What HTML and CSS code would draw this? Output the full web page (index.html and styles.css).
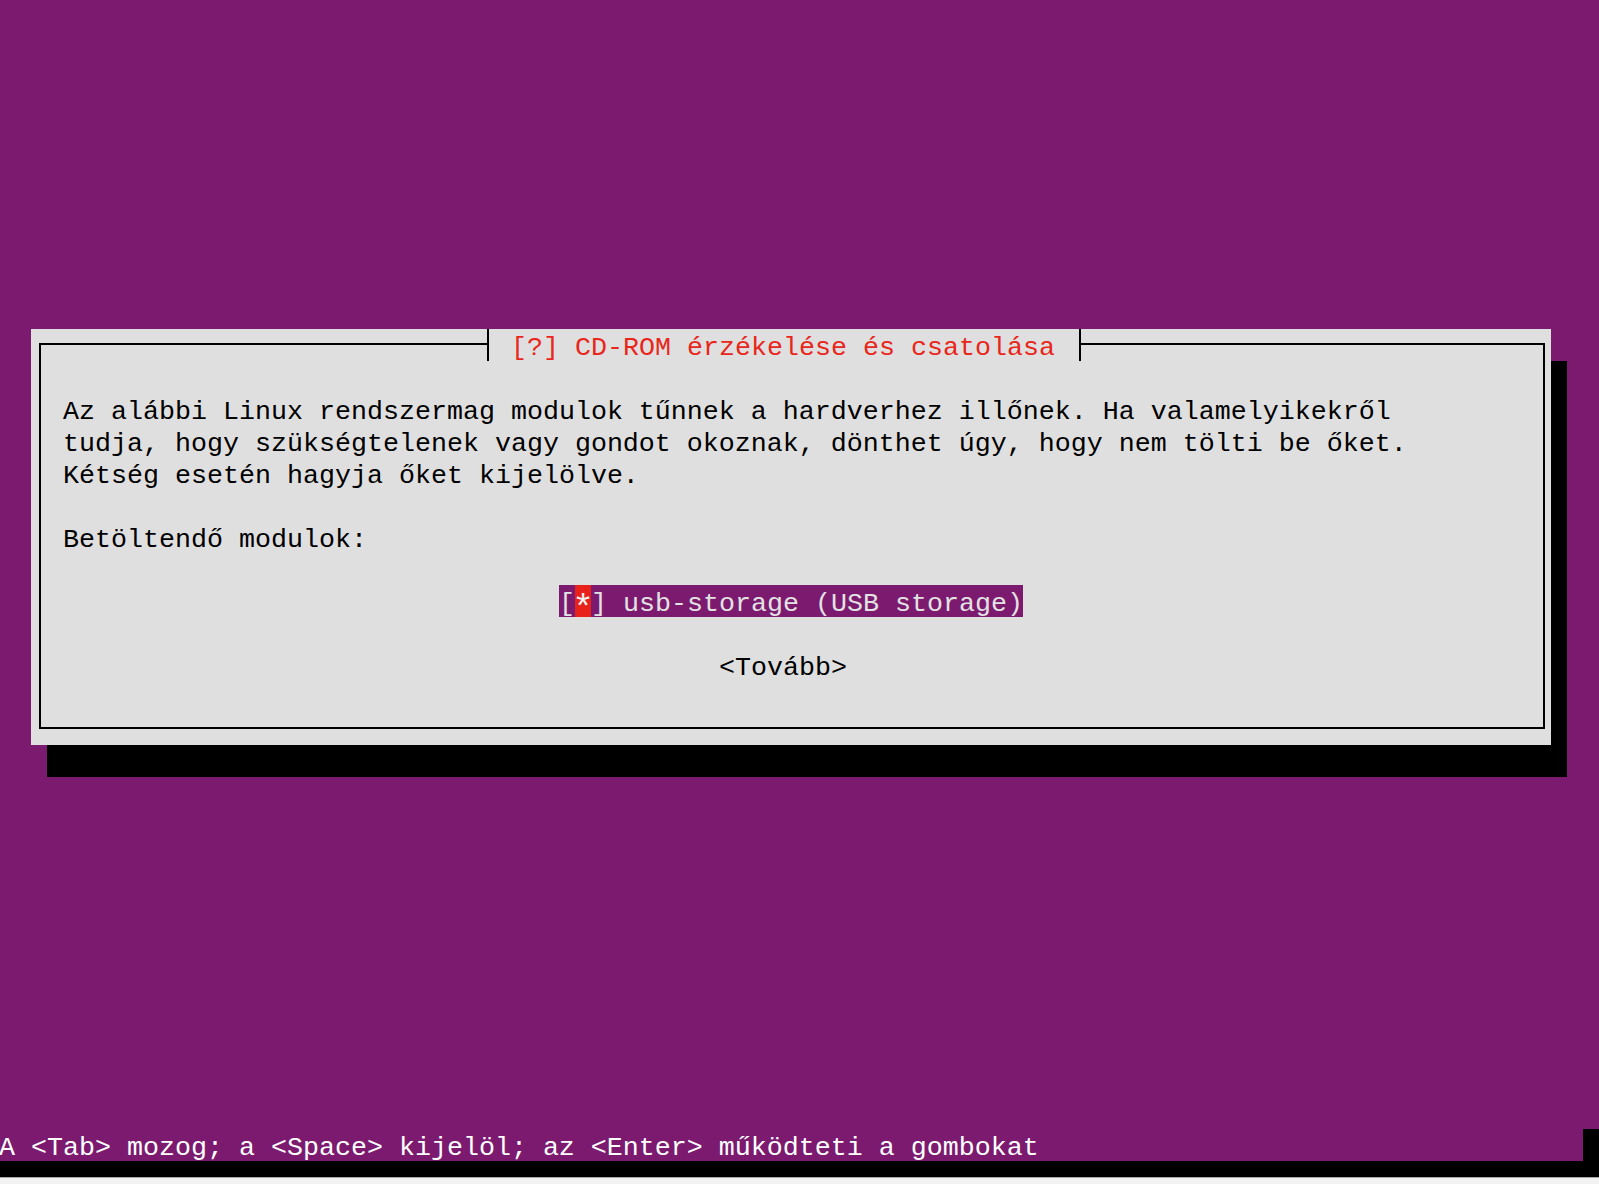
FILE: index.html
```html
<!DOCTYPE html>
<html lang="hu">
<head>
  <meta charset="UTF-8">
  <meta name="viewport" content="width=device-width, initial-scale=1.0">
  <title>CD-ROM érzékelése és csatolása</title>
  <link rel="stylesheet" href="styles.css">
</head>
<body>

  <div class="terminal">
    <div class="dialog">
      <div class="dialog-title">[?] CD-ROM érzékelése és csatolása</div>
      <div class="frame">
        <div class="row"></div>
        <div class="row text">Az alábbi Linux rendszermag modulok tűnnek a hardverhez illőnek. Ha valamelyikekről</div>
        <div class="row text">tudja, hogy szükségtelenek vagy gondot okoznak, dönthet úgy, hogy nem tölti be őket.</div>
        <div class="row text">Kétség esetén hagyja őket kijelölve.</div>
        <div class="row"></div>
        <div class="row text">Betöltendő modulok:</div>
        <div class="row"></div>
        <div class="row item-row"><span class="item">[<span class="mark"><span class="star">*</span></span>] usb-storage (USB storage)</span></div>
        <div class="row"></div>
        <div class="row button-row">&lt;Tovább&gt;</div>
        <div class="row"></div>
      </div>
    </div>

    <div class="status">
      <div class="status-text">A &lt;Tab&gt; mozog; a &lt;Space&gt; kijelöl; az &lt;Enter&gt; működteti a gombokat</div>
      <div class="status-end"></div>
    </div>
  </div>

  <div class="bottom-bar"></div>
  <div class="window-edge"></div>

</body>
</html>
```

FILE: styles.css
```css
body {
  margin: 0;
  width: 1599px;
  height: 1184px;
  overflow: hidden;
  background: #7b1a6f;
  font-family: 'Liberation Mono', 'DejaVu Sans Mono', monospace;
  font-size: 26.66px;
  color: #000;
}

/* grade de 16x32 px, como o console do instalador */
.terminal {
  height: 1161px;
  display: flex;
  flex-direction: column;
}

.dialog {
  position: relative;
  margin-top: 329px;
  margin-left: 31px;
  width: 1520px;
  height: 416px;
  box-sizing: border-box;
  padding: 14px 6px 16px 8px;
  background: #dfdfdf;
  box-shadow: 16px 32px 0 0 #000;
}

.dialog-title {
  position: absolute;
  top: 0;
  left: 456px;
  height: 32px;
  line-height: 38px;
  padding: 0 24px 0 22px;
  border-left: 2px solid #000;
  border-right: 2px solid #000;
  background: #dfdfdf;
  color: #e8261b;
  white-space: pre;
}

.frame {
  border: 2px solid #000;
  padding: 16px 0 14px 0;
}

.row {
  height: 32px;
  line-height: 38px;
  white-space: pre;
}

.text {
  padding-left: 22px;
}

.item-row {
  padding-left: 518px;
}

.item {
  display: inline-block;
  height: 32px;
  vertical-align: top;
  background: #7b1a6f;
  color: #e2e2e2;
}

.mark {
  display: inline-block;
  height: 32px;
  vertical-align: top;
  background: #e8211a;
  color: #f2f2f2;
}

.star {
  display: inline-block;
  transform: translateY(6px) scale(1.35);
}

.button-row {
  padding-left: 678px;
}

.status {
  margin-top: auto;
  height: 32px;
  display: flex;
}

.status-text {
  flex: 1;
  margin-left: -1px;
  line-height: 38px;
  color: #fff;
  white-space: pre;
}

.status-end {
  width: 16px;
  background: #000;
}

.bottom-bar {
  height: 16px;
  background: #000;
}

.window-edge {
  height: 7px;
  border-top: 1px solid #a8a8a8;
  background: #f2f2f2;
}
```
